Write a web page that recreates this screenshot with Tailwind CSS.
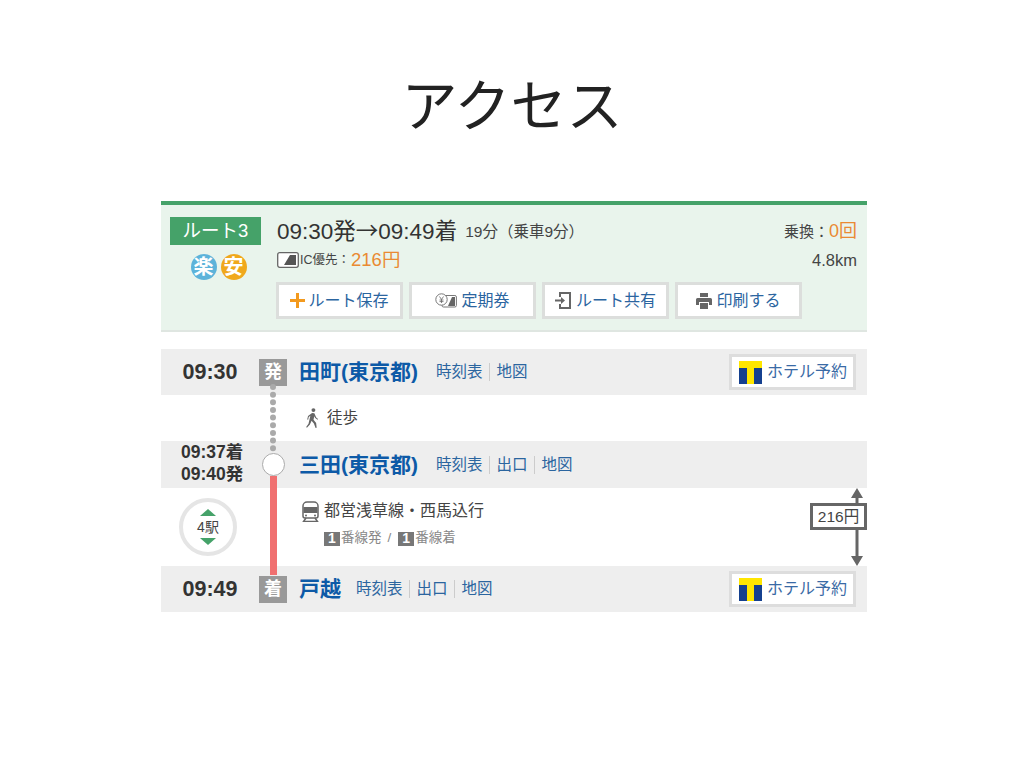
<!DOCTYPE html>
<html lang="ja">
  <head>
    <meta charset="UTF-8" />
    <title>アクセス</title>
    <script src="https://cdn.jsdelivr.net/npm/@tailwindcss/browser@4"></script>
  </head>
  <body class="bg-white w-[1024px] h-[768px] overflow-hidden text-[#444] font-['Liberation_Sans','Noto_Sans_CJK_JP',sans-serif]">
    <!-- Title -->
    <h1 class="h-[201px] flex items-center justify-center pt-[3px] text-[56px] font-normal text-[#222] font-['Noto_Sans_CJK_JP',sans-serif]">アクセス</h1>

    <div class="ml-[161px] w-[706px]">
      <!-- Route summary -->
      <section class="h-[131px] flex bg-[#e9f4ec] border-t-[4px] border-t-[#45a269] border-b-[2px] border-b-[#dfe6e1]">
        <div class="w-[116px] pl-[9px] pt-[12px] flex flex-col">
          <div class="w-[91px] h-[28px] bg-[#45a269] text-white text-[18.5px] flex items-center justify-center">ルート3</div>
          <div class="flex justify-center w-[91px] gap-[4px] mt-[9px] ml-[3px]">
            <span class="w-[26px] h-[26px] rounded-full bg-[#5db3da] text-white font-bold text-[20px] flex items-center justify-center">楽</span>
            <span class="w-[26px] h-[26px] rounded-full bg-[#f0a81c] text-white font-bold text-[20px] flex items-center justify-center">安</span>
          </div>
        </div>
        <div class="flex-1 pr-[10px] pt-[10px]">
          <div class="flex items-center h-[32px]">
            <span class="text-[22.5px] text-[#333] whitespace-nowrap">09:30発<span class="font-['Noto_Sans_CJK_JP',sans-serif]">→</span>09:49着</span>
            <span class="text-[15.5px] ml-[8px] mt-[2px] whitespace-nowrap">19分（乗車9分）</span>
            <span class="ml-auto text-[15px] whitespace-nowrap">乗換：<span class="text-[#ea8a32] text-[18px]">0回</span></span>
          </div>
          <div class="flex items-center h-[26px]">
            <svg class="w-[22px] h-[16px]" viewBox="0 0 22 16"><rect x="0.7" y="0.7" width="20.6" height="14.6" rx="2" fill="#fff" stroke="#666" stroke-width="1.3" /><path d="M7 13 13 3h6v10z" fill="#555" /></svg>
            <span class="text-[12.5px] ml-[1px]">IC優先：</span>
            <span class="text-[#ea8a32] text-[18.5px] ml-[1px]">216円</span>
            <span class="ml-auto text-[16.5px]">4.8km</span>
          </div>
          <div class="flex gap-[6px] mt-[9px] -ml-[1px]">
            <a class="w-[127px] h-[37px] bg-white border-[3px] border-[#dcdedc] flex items-center justify-center gap-[3px] text-[#2b659f] text-[16px]">
              <svg class="w-[15px] h-[15px]" viewBox="0 0 15 15"><path d="M6 0h3v6h6v3H9v6H6V9H0V6h6z" fill="#f39a1e" /></svg>ルート保存
            </a>
            <a class="w-[127px] h-[37px] bg-white border-[3px] border-[#dcdedc] flex items-center justify-center gap-[4px] text-[#2b659f] text-[16px]">
              <svg class="w-[22px] h-[15px]" viewBox="0 0 22 15"><rect x="7" y="2.5" width="14.4" height="11.5" rx="1.5" fill="#fff" stroke="#777" /><path d="M13 13 17 4h3v9z" fill="#666" /><circle cx="6.5" cy="6.5" r="5.7" fill="#fff" stroke="#777" /><path d="M4.5 3.5 6.5 6.5 8.5 3.5M6.5 6.5V10M4.5 7h4M4.5 8.6h4" fill="none" stroke="#666" stroke-width=".8" /></svg>定期券
            </a>
            <a class="w-[127px] h-[37px] bg-white border-[3px] border-[#dcdedc] flex items-center justify-center gap-[5px] text-[#2b659f] text-[16px]">
              <svg class="w-[16px] h-[17px]" viewBox="0 0 16 17"><path d="M5 5V1h10v15H5v-4" fill="none" stroke="#666" stroke-width="2" /><path d="M0 7.5h6V5l4 3.5-4 3.5V9.500H0z" fill="#666" /></svg>ルート共有
            </a>
            <a class="w-[127px] h-[37px] bg-white border-[3px] border-[#dcdedc] flex items-center justify-center gap-[4px] text-[#2b659f] text-[16px]">
              <svg class="w-[16px] h-[16px]" viewBox="0 0 16 16"><path d="M4 0h8v4H4zM1.500 5h13A1.500 1.500 0 0 1 16 6.500V12h-3V9H3v3H0V6.500A1.500 1.500 0 0 1 1.500 5zM4 10h8v6H4z" fill="#666" /></svg>印刷する
            </a>
          </div>
        </div>
      </section>

      <!-- Route detail -->
      <section class="relative mt-[17px]">
        <div class="h-[46px] bg-[#eee] flex items-center">
          <div class="w-[98px] text-center text-[21.5px] font-bold text-[#333]">09:30</div>
          <div class="w-[28px] h-[27px] bg-[#999] text-white font-bold text-[18px] flex items-center justify-center">発</div>
          <div class="ml-[12px] text-[#0d5aa7] font-bold text-[21px]">田町(東京都)</div>
          <div class="ml-[18px] flex items-center text-[#2b659f] text-[15.5px]">
            <span>時刻表</span><span class="w-px h-[18px] bg-[#ccc] ml-[6px] mr-[7px]"></span><span>地図</span>
          </div>
          <a class="ml-auto mr-[11px] w-[127px] h-[36px] bg-white border-[3px] border-[#ddd] flex items-center pl-[7px] gap-[5px] text-[#3a6aa5] text-[16px]">
            <svg class="w-[23px] h-[23px]" viewBox="0 0 23 23"><rect width="23" height="7" fill="#ffe600" /><rect x="8" width="7" height="23" fill="#ffe600" /><rect y="7" width="8" height="16" fill="#15408f" /><rect x="15" y="7" width="8" height="16" fill="#15408f" /></svg>ホテル予約
          </a>
        </div>
        <div class="h-[46px] flex items-center pl-[145px]">
          <svg class="w-[13px] h-[22px] -mt-[1px]" viewBox="0 0 14 22"><circle cx="8" cy="2.500" r="2.100" fill="#666" /><path d="M6.500 5.500 9 6l2 4.500 2 1.500-.6.800-2.500-1.700-1-2-.8 3.700 2.800 3.500L11.500 21.500l-1.200.4-1.800-5-2.500-3-1.800 4.200L1 21.500 .2 20.700l2.500-3.400L4.700 8.500 3 10l-.7 3-1-.3L2.200 8.800z" fill="#666" /></svg>
          <span class="ml-[8px] text-[15.5px]">徒歩</span>
        </div>
        <div class="h-[47px] bg-[#eee] flex items-center">
          <div class="w-[98px] pl-[20px] -mt-[3px] text-[17.5px] leading-[22px] font-bold text-[#333] whitespace-nowrap"><div>09:37着</div><div>09:40発</div></div>
          <div class="w-[28px] flex justify-center"><div class="w-[23px] h-[23px] rounded-full bg-white border border-[#aaa]"></div></div>
          <div class="ml-[12px] text-[#0d5aa7] font-bold text-[21px]">三田(東京都)</div>
          <div class="ml-[18px] flex items-center text-[#2b659f] text-[15.5px]">
            <span>時刻表</span><span class="w-px h-[18px] bg-[#ccc] ml-[6px] mr-[7px]"></span><span>出口</span><span class="w-px h-[18px] bg-[#ccc] ml-[6px] mr-[7px]"></span><span>地図</span>
          </div>
        </div>
        <div class="h-[78px] flex items-center">
          <div class="w-[98px] flex justify-center pr-[4px]">
            <div class="w-[58px] h-[58px] rounded-full border-[4px] border-[#e5e5e5] flex flex-col items-center justify-center gap-[3px] text-[14px] leading-[16px]">
              <svg class="w-[16px] h-[7px]" viewBox="0 0 16 7"><path d="M8 0l8 7H0z" fill="#45a269" /></svg>
              <span>4駅</span>
              <svg class="w-[16px] h-[7px]" viewBox="0 0 16 7"><path d="M8 7 16 0H0z" fill="#45a269" /></svg>
            </div>
          </div>
          <div class="ml-[43px] mb-[6px]">
            <div class="flex items-center">
              <svg class="w-[17px] h-[21px]" viewBox="0 0 17 21"><path d="M5 1h7a4 4 0 0 1 4 4v10a2 2 0 0 1-2 2H3a2 2 0 0 1-2-2V5a4 4 0 0 1 4-4z" fill="none" stroke="#666" stroke-width="1.500" /><path d="M1.500 6h14v6h-14z" fill="#666" /><path d="M4 17 1.500 20.500h14L13 17" fill="none" stroke="#666" stroke-width="1.500" /><circle cx="4" cy="14.500" r="1" fill="#666" /><circle cx="13" cy="14.500" r="1" fill="#666" /></svg>
              <span class="ml-[5px] text-[16px]">都営浅草線・西馬込行</span>
            </div>
            <div class="flex items-center ml-[22px] mt-[5px] text-[13.5px] text-[#888]">
              <span class="w-[16px] h-[14px] bg-[#777] text-white text-[14px] font-bold flex items-center justify-center">1</span>
              <span class="ml-px">番線発</span><span class="ml-[6px] mr-[7px]">/</span>
              <span class="w-[16px] h-[14px] bg-[#777] text-white text-[14px] font-bold flex items-center justify-center">1</span>
              <span class="ml-px">番線着</span>
            </div>
          </div>
          <div class="ml-auto self-stretch relative w-[57px] flex items-center">
            <svg class="absolute right-0 top-0 w-[20px] h-[78px]" viewBox="0 0 20 78"><path d="M10 8v62" stroke="#666" stroke-width="3" /><path d="M10 0l6 10H4zM10 78 16 68H4z" fill="#666" /></svg>
            <div class="relative w-[57px] h-[27px] bg-white border-[3px] border-[#666] flex items-center justify-center text-[15.5px] mt-[-21px]">216円</div>
          </div>
        </div>
        <div class="h-[46px] bg-[#eee] flex items-center">
          <div class="w-[98px] text-center text-[21.5px] font-bold text-[#333]">09:49</div>
          <div class="w-[28px] h-[27px] bg-[#999] text-white font-bold text-[18px] flex items-center justify-center">着</div>
          <div class="ml-[12px] text-[#0d5aa7] font-bold text-[21px]">戸越</div>
          <div class="ml-[15px] flex items-center text-[#2b659f] text-[15.5px]">
            <span>時刻表</span><span class="w-px h-[18px] bg-[#ccc] ml-[6px] mr-[7px]"></span><span>出口</span><span class="w-px h-[18px] bg-[#ccc] ml-[6px] mr-[7px]"></span><span>地図</span>
          </div>
          <a class="ml-auto mr-[11px] w-[127px] h-[36px] bg-white border-[3px] border-[#ddd] flex items-center pl-[7px] gap-[5px] text-[#3a6aa5] text-[16px]">
            <svg class="w-[23px] h-[23px]" viewBox="0 0 23 23"><rect width="23" height="7" fill="#ffe600" /><rect x="8" width="7" height="23" fill="#ffe600" /><rect y="7" width="8" height="16" fill="#15408f" /><rect x="15" y="7" width="8" height="16" fill="#15408f" /></svg>ホテル予約
          </a>
        </div>
        <!-- timeline connecting the stops -->
        <svg class="absolute left-0 top-0 w-[130px] h-[263px] pointer-events-none" viewBox="0 0 130 263">
          <path d="M112 38V100" stroke="#aaa" stroke-width="6" stroke-linecap="round" stroke-dasharray="0 7.650" fill="none" />
          <rect x="109" y="127" width="7" height="99" fill="#f07070" />
        </svg>
      </section>
    </div>
  </body>
</html>
